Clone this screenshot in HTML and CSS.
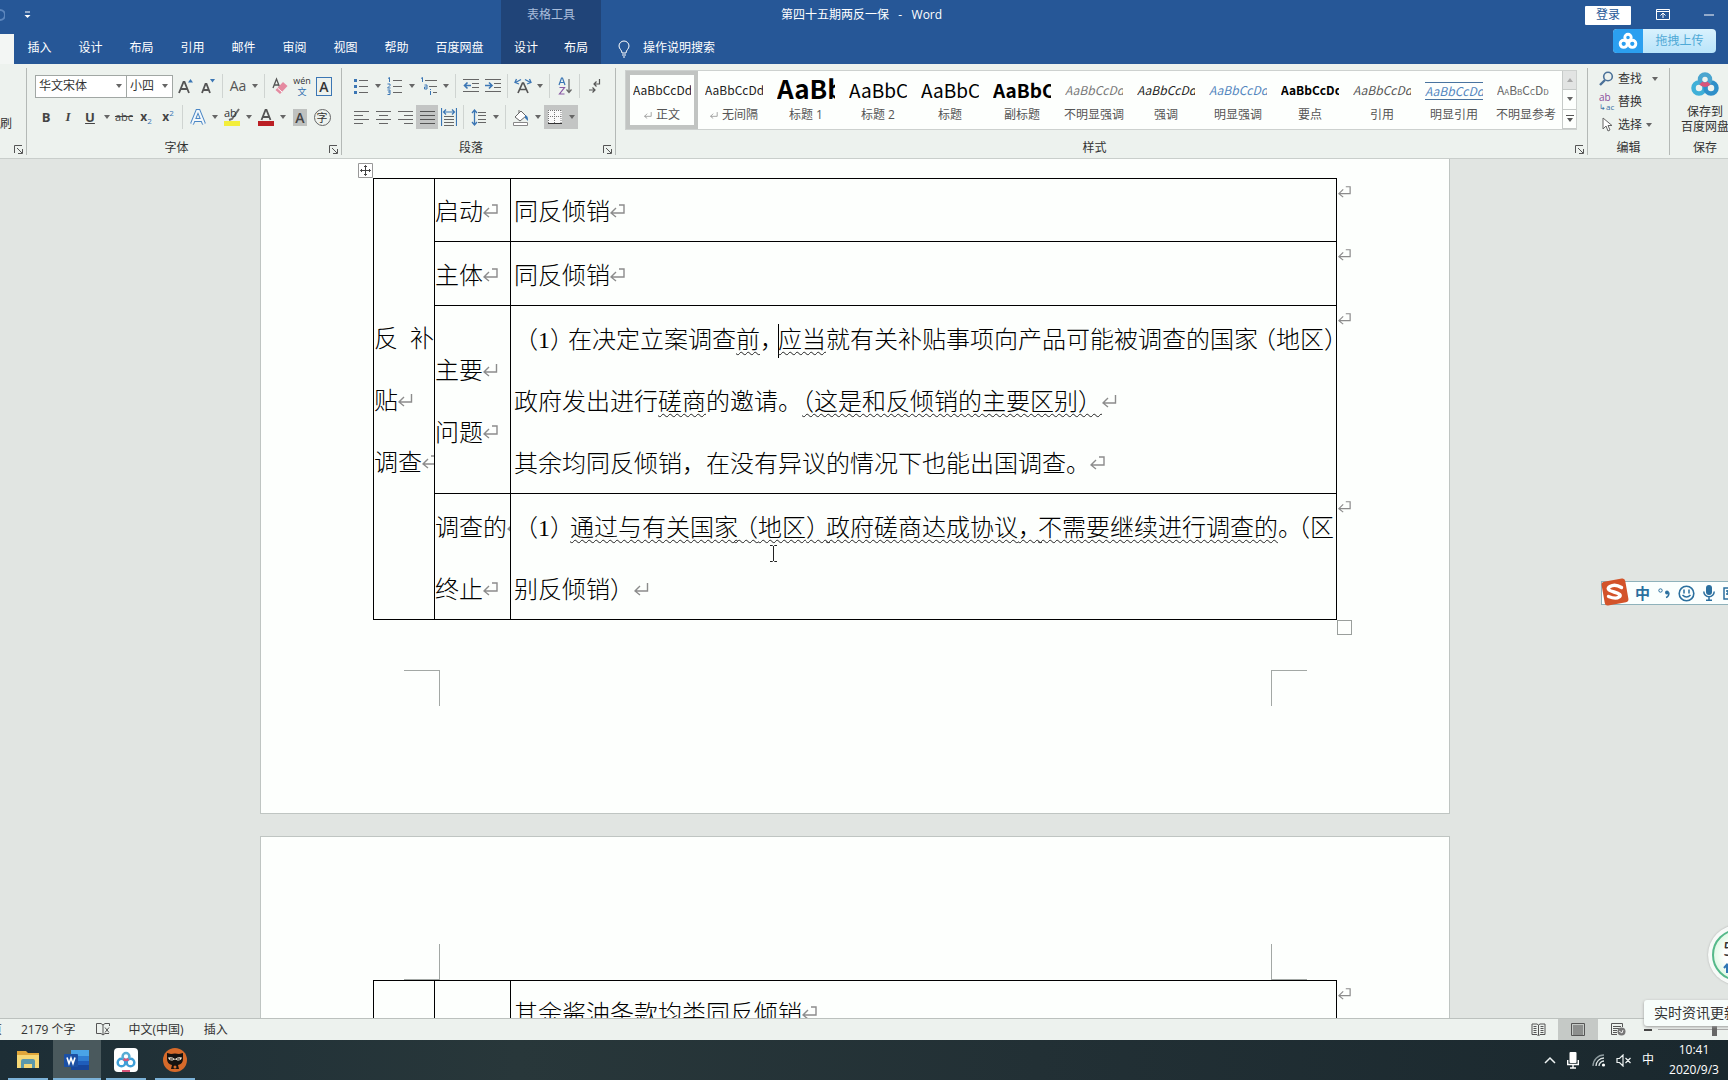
FILE: index.html
```html
<!DOCTYPE html>
<html lang="zh-CN">
<head>
<meta charset="utf-8">
<title>第四十五期两反一保 - Word</title>
<link rel="stylesheet" href="styles.css">
</head>
<body>
<svg class="defs" aria-hidden="true">
  <symbol id="arrow" viewBox="0 0 6 4"><path d="M0 0h6L3 4z" fill="#666"/></symbol>
  <symbol id="para" viewBox="0 0 15 15"><path d="M9 2h5v8H1M6 5L1 10l5 4" fill="none" stroke="#8c8c8c" stroke-width="1.4"/></symbol>
  <symbol id="brk" viewBox="0 0 15 15"><path d="M13.500 2v8H1M6 5L1 10l5 4" fill="none" stroke="#8c8c8c" stroke-width="1.400"/></symbol>
  <symbol id="launch" viewBox="0 0 9 9"><path d="M.5 8V.5H8M3 3l5 5M8.500 4v4.500H4" fill="none" stroke="#555"/></symbol>
  <symbol id="cloud" viewBox="0 0 28 24"><g fill="none" stroke-width="4.500"><circle cx="8" cy="16" r="5.500" stroke="#3fb0d8"/><circle cx="20" cy="16" r="5.500" stroke="#2f8fc9"/><circle cx="14" cy="7.500" r="5" stroke="#4aa5cf"/><path d="M10 11a5.500 5.500 0 0 0 8 0" stroke="#d9547a"/></g></symbol>
  <symbol id="cloudw" viewBox="0 0 28 24"><g fill="none" stroke-width="4" stroke="#fff"><circle cx="8" cy="16" r="5"/><circle cx="20" cy="16" r="5"/><circle cx="14" cy="7" r="4.500"/></g></symbol>
</svg>

<div class="app">
  <header class="top">
    <div class="top-main">
      <div class="qat">
        <svg width="5" height="14" viewBox="0 0 5 14"><path d="M0 2a5 5 0 0 1 0 10" fill="none" stroke="#5c86bd" stroke-width="2"/></svg>
        <button class="qat-more" aria-label="自定义快速访问工具栏"><svg width="7" height="8" viewBox="0 0 7 8"><path d="M1 1h5" stroke="#fff"/><path d="M.5 4h6L3.500 7z" fill="#fff"/></svg></button>
      </div>
      <nav class="tabs">
        <span class="tab-active"></span>
        <button class="tab">插入</button><button class="tab">设计</button><button class="tab">布局</button><button class="tab">引用</button><button class="tab">邮件</button><button class="tab">审阅</button><button class="tab">视图</button><button class="tab">帮助</button><button class="tab tab-wide">百度网盘</button>
      </nav>
    </div>
    <div class="top-context">
      <div class="context-title">表格工具</div>
      <nav class="tabs context-tabs"><button class="tab">设计</button><button class="tab">布局</button></nav>
    </div>
    <div class="top-rest">
      <div class="titlebar">
        <h1 class="doc-title">第四十五期两反一保&nbsp;&nbsp; -&nbsp;&nbsp; Word</h1>
        <button class="login">登录</button>
        <button class="win" aria-label="功能区显示选项"><svg width="14" height="12" viewBox="0 0 14 12"><path d="M.5.5h13v10H.5zM.5 2.500h13M7 9V4.500M4.500 6.500L7 4l2.500 2.500" fill="none" stroke="#fff"/></svg></button>
        <button class="win" aria-label="最小化"><svg width="10" height="2" viewBox="0 0 10 2"><path d="M0 1h10" stroke="#fff"/></svg></button>
      </div>
      <div class="tellme">
        <svg width="12" height="18" viewBox="0 0 12 18"><path d="M4 13c0-3-3-4-3-7a5 5 0 0 1 10 0c0 3-3 4-3 7zM4 15h4M5 17h2" fill="none" stroke="#fff"/></svg>
        <button class="tell">操作说明搜索</button>
        <button class="upload"><span class="upload-ic"><svg width="20" height="18"><use href="#cloudw"/></svg></span><span class="upload-tx">拖拽上传</span></button>
      </div>
    </div>
  </header>

  <section class="ribbon">
    <div class="group g-clip">
      <div class="g-body"><button class="painter">刷</button></div>
      <div class="g-foot"><span class="g-name"></span><button class="launch" aria-label="剪贴板"><svg width="9" height="9"><use href="#launch"/></svg></button></div>
    </div>
    <div class="group g-font">
      <div class="g-body">
        <div class="row">
          <select class="combo combo-font" aria-label="字体"><option>华文宋体</option></select><select class="combo combo-size" aria-label="字号"><option>小四</option></select>
          <button class="b first" aria-label="增大字号"><svg width="16" height="16" viewBox="0 0 16 16"><path d="M1 15L5.500 4h1L11 15M3 11h6" fill="none" stroke="#555" stroke-width="1.800"/><path d="M10 4.500L12.500 1 15 4.500z" fill="#3b76b4"/></svg></button>
          <button class="b" aria-label="减小字号"><svg width="16" height="16" viewBox="0 0 16 16"><path d="M2 15L5.500 6h1L10 15M3.500 12h5" fill="none" stroke="#555" stroke-width="1.800"/><path d="M10 1h5l-2.500 3.500z" fill="#3b76b4"/></svg></button>
          <i class="sep"></i>
          <button class="b t-aa">Aa</button><button class="d" aria-label="更改大小写"><svg><use href="#arrow"/></svg></button>
          <i class="sep"></i>
          <button class="b" aria-label="清除格式"><svg width="16" height="18" viewBox="0 0 16 18"><path d="M1 11L4.500 2 8 11M2 8h5" fill="none" stroke="#555" stroke-width="1.300"/><path d="M3.500 13L11 5l4.500 4L8 17z" fill="#e58aa0"/><path d="M5.500 11l4.500 4" stroke="#fff" stroke-width="1"/></svg></button>
          <button class="b t-wen"><span>wén</span><span class="blue">文</span></button>
          <button class="b" aria-label="字符边框"><span class="boxed">A</span></button>
        </div>
        <div class="row">
          <button class="b t-b">B</button><button class="b t-i">I</button><button class="b t-u">U</button><button class="d" aria-label="下划线样式"><svg><use href="#arrow"/></svg></button>
          <button class="b t-s">abc</button><button class="b t-x">x<sub>2</sub></button><button class="b t-x">x<sup>2</sup></button>
          <i class="sep"></i>
          <button class="b" aria-label="文本效果"><svg width="16" height="18" viewBox="0 0 16 18"><path d="M2 16L7.300 3h1.400L14 16M4.500 12h7" fill="none" stroke="#4a86c5" stroke-width="4"/><path d="M2 16L7.300 3h1.400L14 16M4.500 12h7" fill="none" stroke="#f3f8fb" stroke-width="2"/></svg></button><button class="d" aria-label="文本效果选项"><svg><use href="#arrow"/></svg></button>
          <button class="b t-hl"><span>ab</span><svg width="16" height="18" viewBox="0 0 16 18"><path d="M15 1L8 11l-3 1" fill="none" stroke="#6b6b6b" stroke-width="2"/><path d="M0 13h16v5H0z" fill="#f3ee3b"/></svg></button><button class="d" aria-label="突出显示颜色"><svg><use href="#arrow"/></svg></button>
          <button class="b" aria-label="字体颜色"><svg width="16" height="18" viewBox="0 0 16 18"><path d="M3.500 12L7.500 2h1l4 10M5 9h6" fill="none" stroke="#555" stroke-width="1.800"/><path d="M0 13h16v5H0z" fill="#bb1f24"/></svg></button><button class="d" aria-label="字体颜色选项"><svg><use href="#arrow"/></svg></button>
          <button class="b" aria-label="字符底纹"><span class="shade">A</span></button><button class="b" aria-label="带圈字符"><span class="ring">字</span></button>
        </div>
      </div>
      <div class="g-foot"><span class="g-name">字体</span><button class="launch" aria-label="字体设置"><svg width="9" height="9"><use href="#launch"/></svg></button></div>
    </div>
    <div class="group g-para">
      <div class="g-body">
        <div class="row">
          <button class="b" aria-label="项目符号"><svg width="16" height="18" viewBox="0 0 16 18"><path d="M1 2h3v3H1zM1 8h3v3H1zM1 14h3v3H1z" fill="#3b76b4"/><path d="M6 3.500h9M6 9.500h9M6 15.500h9" stroke="#666"/></svg></button><button class="d" aria-label="项目符号库"><svg><use href="#arrow"/></svg></button>
          <button class="b" aria-label="编号"><svg width="16" height="18" viewBox="0 0 16 18"><path d="M1 1.500l1.500-1v4.500M.5 7h2.500v1.500L.5 11h3M.5 13h2.500v2h-2M3 15v2.500H.5" fill="none" stroke="#3b76b4"/><path d="M6 3.500h9M6 9.500h9M6 15.500h9" stroke="#666"/></svg></button><button class="d" aria-label="编号库"><svg><use href="#arrow"/></svg></button>
          <button class="b" aria-label="多级列表"><svg width="18" height="18" viewBox="0 0 18 18"><path d="M1 1.500l1.500-1v4.500M4.500 8h2.500v4H4.500v-2h2M10.500 12v1M10.500 14v4" fill="none" stroke="#3b76b4"/><path d="M5 3.500h12M9 9.500h8M13 15.500h4" stroke="#666"/></svg></button><button class="d" aria-label="列表库"><svg><use href="#arrow"/></svg></button>
          <i class="sep"></i>
          <button class="b" aria-label="减少缩进量"><svg width="16" height="14" viewBox="0 0 16 14"><path d="M0 .5h16M9 4.500h7M9 8.500h7M0 12.500h16" stroke="#666"/><path d="M8 6.500H2M4.500 3.500l-3 3 3 3" fill="none" stroke="#3b76b4" stroke-width="1.600"/></svg></button>
          <button class="b" aria-label="增加缩进量"><svg width="16" height="14" viewBox="0 0 16 14"><path d="M0 .5h16M9 4.500h7M9 8.500h7M0 12.500h16" stroke="#666"/><path d="M0 6.500h6M4 3.500l3 3-3 3" fill="none" stroke="#3b76b4" stroke-width="1.600"/></svg></button>
          <i class="sep"></i>
          <button class="b" aria-label="中文版式"><svg width="18" height="16" viewBox="0 0 18 16"><path d="M4 15L8.500 5h1L14 15M6 11.500h6" fill="none" stroke="#555" stroke-width="1.700"/><path d="M7 1.500L1.500 4.500M2.500 1L1 4.500l4 1.500M11 1.500l5.500 3M15.500 1L17 4.500 13 6" fill="none" stroke="#3b76b4" stroke-width="1.300"/></svg></button><button class="d" aria-label="中文版式选项"><svg><use href="#arrow"/></svg></button>
          <i class="sep"></i>
          <button class="b" aria-label="排序"><svg width="14" height="18" viewBox="0 0 14 18"><path d="M1 8l2.500-7h1L7 8M2 5.500h4" fill="none" stroke="#3b76b4" stroke-width="1.200"/><path d="M1.500 10.500h5l-5 6.500h5" fill="none" stroke="#8a5aa5" stroke-width="1.200"/><path d="M11 2v13M8.500 12.500L11 15.500l2.500-3" fill="none" stroke="#666" stroke-width="1.200"/></svg></button>
          <i class="sep"></i>
          <button class="b" aria-label="显示编辑标记"><svg width="12" height="16" viewBox="0 0 12 16"><path d="M10.500 1v5H5M7.500 3.500L5 6l2.500 2.500M0 12h6M3.500 9.500L6 12l-2.500 2.500" fill="none" stroke="#555" stroke-width="1.200"/></svg></button>
        </div>
        <div class="row">
          <button class="b" aria-label="左对齐"><svg width="15" height="13" viewBox="0 0 15 13"><path d="M0 .5h15M0 4.500h9M0 8.500h15M0 12.500h9" stroke="#666"/></svg></button>
          <button class="b" aria-label="居中"><svg width="15" height="13" viewBox="0 0 15 13"><path d="M0 .5h15M3 4.500h9M0 8.500h15M3 12.500h9" stroke="#666"/></svg></button>
          <button class="b" aria-label="右对齐"><svg width="15" height="13" viewBox="0 0 15 13"><path d="M0 .5h15M6 4.500h9M0 8.500h15M6 12.500h9" stroke="#666"/></svg></button>
          <button class="b on" aria-label="两端对齐"><svg width="15" height="13" viewBox="0 0 15 13"><path d="M0 .5h15M0 4.500h15M0 8.500h15M0 12.500h15" stroke="#555"/></svg></button>
          <button class="b" aria-label="分散对齐"><svg width="16" height="18" viewBox="0 0 16 18"><path d="M.5 0v18M15.500 0v18M2.500 4h11M5 1.500L2.500 4 5 6.500M11 1.500L13.500 4 11 6.500" fill="none" stroke="#3b76b4" stroke-width="1.200"/><path d="M3 8.500h10M3 11.500h10M3 14.500h10M3 17.500h10" stroke="#666"/></svg></button>
          <i class="sep"></i>
          <button class="b" aria-label="行距"><svg width="16" height="17" viewBox="0 0 16 17"><path d="M3.500 1v15M1 4l2.500-3L6 4M1 13l2.500 3L6 13" fill="none" stroke="#3b76b4" stroke-width="1.300"/><path d="M7 3.500h8M7 6.500h8M7 10.500h8M7 13.500h8" stroke="#666"/></svg></button><button class="d" aria-label="行距选项"><svg><use href="#arrow"/></svg></button>
          <i class="sep"></i>
          <button class="b" aria-label="底纹"><svg width="16" height="17" viewBox="0 0 16 17"><path d="M2 8l6-6 5 5-6 5zM6 4V1" fill="#fff" stroke="#666"/><path d="M12 6c3 1 3 3 3 6l-3-3z" fill="#3b76b4"/><path d="M.5 13.500h14v3H.5z" fill="#fff" stroke="#888"/></svg></button><button class="d" aria-label="底纹颜色"><svg><use href="#arrow"/></svg></button>
          <button class="b on" aria-label="边框"><svg width="14" height="14" viewBox="0 0 14 14"><path d="M0 0h14v14H0z" fill="#fafafa"/><path d="M.5 0v13M13 0v13M0 .5h14M6.500 0v13M0 6.500h13" stroke="#777" stroke-dasharray="1 1"/><path d="M0 13.500h14" stroke="#333"/></svg></button><button class="d on" aria-label="边框选项"><svg><use href="#arrow"/></svg></button>
        </div>
      </div>
      <div class="g-foot"><span class="g-name">段落</span><button class="launch" aria-label="段落设置"><svg width="9" height="9"><use href="#launch"/></svg></button></div>
    </div>
    <div class="group g-style">
      <div class="g-body">
        <div class="gallery">
          <button class="st st-on"><span class="smp">AaBbCcDd</span><span class="nm"><svg width="8" height="8"><use href="#brk"/></svg> 正文</span></button>
          <button class="st"><span class="smp">AaBbCcDd</span><span class="nm"><svg width="8" height="8"><use href="#brk"/></svg> 无间隔</span></button>
          <button class="st"><span class="smp s-h1">AaBb</span><span class="nm">标题 1</span></button>
          <button class="st"><span class="smp s-h2">AaBbC</span><span class="nm">标题 2</span></button>
          <button class="st"><span class="smp s-h2">AaBbC</span><span class="nm">标题</span></button>
          <button class="st"><span class="smp s-h2 s-bold">AaBbC</span><span class="nm">副标题</span></button>
          <button class="st"><span class="smp s-it s-gray">AaBbCcDd</span><span class="nm">不明显强调</span></button>
          <button class="st"><span class="smp s-it">AaBbCcDd</span><span class="nm">强调</span></button>
          <button class="st"><span class="smp s-it s-blue">AaBbCcDd</span><span class="nm">明显强调</span></button>
          <button class="st"><span class="smp s-bold">AaBbCcDd</span><span class="nm">要点</span></button>
          <button class="st"><span class="smp s-it s-dim">AaBbCcDd</span><span class="nm">引用</span></button>
          <button class="st"><span class="smp s-it s-blue s-rule">AaBbCcDd</span><span class="nm">明显引用</span></button>
          <button class="st"><span class="smp s-sc">AaBbCcDd</span><span class="nm">不明显参考</span></button>
          <div class="scroll">
            <button class="up" aria-label="上一行"><svg width="6" height="4" viewBox="0 0 6 4"><path d="M0 4h6L3 0z" fill="#aaa"/></svg></button>
            <button aria-label="下一行"><svg width="6" height="4"><use href="#arrow"/></svg></button>
            <button aria-label="更多样式"><svg width="8" height="8" viewBox="0 0 8 8"><path d="M0 .5h8" stroke="#555"/><path d="M1 3h6L4 7z" fill="#555"/></svg></button>
          </div>
        </div>
      </div>
      <div class="g-foot"><span class="g-name">样式</span><button class="launch" aria-label="样式窗格"><svg width="9" height="9"><use href="#launch"/></svg></button></div>
    </div>
    <div class="group g-edit">
      <div class="g-body">
        <button class="ed"><svg width="15" height="15" viewBox="0 0 15 15"><circle cx="9" cy="5.500" r="4.300" fill="none" stroke="#4b7199" stroke-width="1.600"/><path d="M6 9l-5 5" stroke="#4b7199" stroke-width="2.400"/></svg><span>查找</span><svg class="far" width="6" height="4"><use href="#arrow"/></svg></button>
        <button class="ed"><span class="abac"><span>ab</span><span class="ac">↳ac</span></span><span>替换</span></button>
        <button class="ed"><svg width="15" height="15" viewBox="0 0 15 15"><path d="M4 1v11l3-3 2 5 2-1-2-4.500h4z" fill="#fff" stroke="#666"/></svg><span>选择</span><svg width="6" height="4"><use href="#arrow"/></svg></button>
      </div>
      <div class="g-foot"><span class="g-name">编辑</span></div>
    </div>
    <div class="group g-save">
      <div class="g-body"><button class="save"><svg width="28" height="24"><use href="#cloud"/></svg><span>保存到</span><span>百度网盘</span></button></div>
      <div class="g-foot"><span class="g-name">保存</span></div>
    </div>
  </section>

  <main class="canvas">
    <article class="page page-one">
      <div class="sheet">
        <svg class="move" width="15" height="15" viewBox="0 0 15 15"><path d="M.5.5h14v14H.5z" fill="#fff" stroke="#999"/><path d="M7.500 2.500v10M2.500 7.500h10M6 4l1.500-1.500L9 4M6 11l1.500 1.500L9 11M4 6L2.500 7.500 4 9M11 6l1.500 1.500L11 9" fill="none" stroke="#444"/></svg>
        <table class="doc">
          <colgroup><col class="c1"><col class="c2"><col></colgroup>
          <tr><td rowspan="4">反&ensp;补<br>贴<svg class="pm"><use href="#brk"/></svg><br>调查<svg class="pm"><use href="#para"/></svg></td><td>启动<svg class="pm"><use href="#para"/></svg></td><td class="txt">同反倾销<svg class="pm"><use href="#para"/></svg><svg class="rowend"><use href="#para"/></svg></td></tr>
          <tr class="r2"><td>主体<svg class="pm"><use href="#para"/></svg></td><td class="txt">同反倾销<svg class="pm"><use href="#para"/></svg><svg class="rowend"><use href="#para"/></svg></td></tr>
          <tr class="r3"><td>主要<svg class="pm"><use href="#brk"/></svg><br>问题<svg class="pm"><use href="#para"/></svg></td><td class="txt">（<span class="num">1</span><span class="k6">）</span>在决定立案调查<u>前</u><span class="k6">，</span><i class="caret"></i><u>应当</u>就有关补贴事项向产品可能被调查的国家<span class="o6">（</span>地区）<br>政府发出进行<u>磋商</u>的邀请。<u>（这是和反倾销的主要区别）</u><svg class="pm"><use href="#brk"/></svg><br>其余均同反倾销，在没有异议的情况下也能出国调查。<svg class="pm"><use href="#para"/></svg><svg class="rowend"><use href="#para"/></svg></td></tr>
          <tr class="r4"><td>调查的<svg class="pm"><use href="#para"/></svg><br>终止<svg class="pm"><use href="#para"/></svg></td><td class="txt">（<span class="num">1</span><span class="k4">）</span><u>通过与有关国家<span class="o4">（</span>地区<span class="k4">）</span>政府磋商达成协议<span class="k4">，</span>不需要继续进行调查的</u><span class="k4">。</span>（区<br>别反倾销）<svg class="pm"><use href="#brk"/></svg><svg class="rowend"><use href="#para"/></svg></td></tr>
        </table>
        <span class="handle"></span>
      </div>
      <div class="crops"><i class="crop tr"></i><i class="crop tl"></i></div>
      <svg class="ibeam" width="9" height="17" viewBox="0 0 9 17"><path d="M1 .5h2.500l1 1 1-1H8M1 16.500h2.500l1-1 1 1H8M4.500 1v15" fill="none" stroke="#222"/></svg>
    </article>
    <article class="page page-two">
      <div class="crops"><i class="crop br"></i><i class="crop bl"></i></div>
      <div class="sheet">
        <table class="doc">
          <colgroup><col class="c1"><col class="c2"><col></colgroup>
          <tr><td></td><td></td><td class="txt">其余酱油条款均类同反倾销<svg class="pm"><use href="#para"/></svg><svg class="rowend"><use href="#para"/></svg></td></tr>
        </table>
      </div>
    </article>
  </main>

  <footer class="status">
    <span class="cut">页</span>
    <button class="words">2179 个字</button>
    <button class="proof" aria-label="校对"><svg width="15" height="13" viewBox="0 0 15 13"><path d="M7 12V2L5 .500H.5v10H5L7 12l2-1.500h4M7 2L9 .500h4.500V3M9 4.500l4 5M13 4.500l-4 5" fill="none" stroke="#555"/></svg></button>
    <button class="lang">中文(中国)</button>
    <button class="ins">插入</button>
    <div class="views">
      <button class="view" aria-label="阅读视图"><svg width="15" height="13" viewBox="0 0 15 13"><path d="M7.500 12V2L6 1H1v10.500h5L7.500 13 9 11.500h5V1H9L7.500 2M2.500 3.500h3M2.500 5.500h3M2.500 7.500h3M2.500 9.500h3M9.500 3.500h3M9.500 5.500h3M9.500 7.500h3M9.500 9.500h3" fill="none" stroke="#555"/></svg></button>
      <button class="view view-on" aria-label="页面视图"><svg width="14" height="13" viewBox="0 0 14 13"><path d="M.5.5h13v12H.5zM2 3h10M2 5h10M2 7h10M2 9h10M2 11h10" fill="none" stroke="#555"/></svg></button>
      <button class="view" aria-label="Web 版式视图"><svg width="15" height="13" viewBox="0 0 15 13"><path d="M6 11.500H.5V.5h11V4M2 3.500h8M2 5.500h6M2 7.500h4M2 9.500h4" fill="none" stroke="#555"/><circle cx="10.500" cy="8.500" r="4" fill="#777"/><path d="M8 8l3 2 1-3" stroke="#eee" fill="none"/></svg></button>
      <button class="minus" aria-label="缩小"><svg width="8" height="2" viewBox="0 0 8 2"><path d="M0 1h8" stroke="#444" stroke-width="2"/></svg></button>
      <input class="zoom" type="range" min="0" max="100" value="50" aria-label="显示比例">
    </div>
  </footer>

  <footer class="taskbar">
    <button class="task" aria-label="文件资源管理器"><svg width="24" height="24" viewBox="0 0 24 24"><path d="M1 3h9l2 2h11v15H1z" fill="#e0a63a"/><path d="M1 7h22v13H1z" fill="#f6d876"/><path d="M5 20v-7q0-2 2-2h10q2 0 2 2v7h-3v-4H8v4z" fill="#5b98ac"/></svg></button>
    <button class="task task-on" aria-label="Word"><svg width="26" height="24" viewBox="0 0 26 24"><path d="M7 2h18v6H7z" fill="#4aa3e6"/><path d="M7 8h18v5H7z" fill="#2f7dd2"/><path d="M7 13h18v4H7z" fill="#1f5dbb"/><path d="M7 17h18v5H7z" fill="#17469c"/><rect x="0" y="6" width="14" height="13" rx="1" fill="#1c50a4"/><path d="M3 9.500l2 6 2-5.500 2 5.500 2-6" fill="none" stroke="#fff" stroke-width="1.600"/></svg></button>
    <button class="task" aria-label="百度网盘"><svg width="24" height="24" viewBox="0 0 24 24"><rect width="24" height="24" rx="4" fill="#fff"/><g fill="none" stroke-width="2.500"><circle cx="7.500" cy="14.500" r="3.800" stroke="#3f9fd8"/><circle cx="16.500" cy="14.500" r="3.800" stroke="#3f9fd8"/><circle cx="12" cy="8.500" r="3.400" stroke="#58acd4"/><path d="M9.500 11a4 4 0 0 0 5 0" stroke="#d9547a"/></g><path d="M8 23h8" stroke="#d9547a" stroke-width="2"/></svg></button>
    <button class="task" aria-label="直播助手"><svg width="24" height="24" viewBox="0 0 24 24"><circle cx="12" cy="12" r="12" fill="#d76a2a"/><path d="M4 5l4 1q4-1 8 0l4-1v6q0 5-5 6l1 4H8l1-4q-5-1-5-6z" fill="#161210"/><path d="M5 9.500q4-1 6 1 1 .8 2 0 2-2 6-1-1 3.500-4.500 3-1.500-1-2.500-1t-2.500 1Q6 13 5 9.500z" fill="#f4ead8"/><path d="M7 11h3M14 11h3" stroke="#161210" stroke-width="1.200"/><circle cx="12" cy="19" r="1.500" fill="#d76a2a"/></svg></button>
    <div class="tray">
      <svg width="12" height="8" viewBox="0 0 12 8"><path d="M1 7l5-5 5 5" fill="none" stroke="#eef3f3" stroke-width="1.500"/></svg>
      <svg class="t-mic" width="12" height="17" viewBox="0 0 12 17"><rect x="2.500" y="0" width="7" height="11" rx="1" fill="#fff"/><path d="M.7 8v4.500h10.600V8M6 12.500v3M3 16h6" fill="none" stroke="#fff" stroke-width="1.400"/></svg>
      <svg width="14" height="13" viewBox="0 0 14 13"><g fill="none" stroke-width="1.300"><path d="M1 12A11 11 0 0 1 12 1" stroke="#8d9a9e"/><path d="M4 12a8 8 0 0 1 8-8M7 12a5 5 0 0 1 5-5" stroke="#dfe6e6"/></g><circle cx="11.500" cy="11" r="1.600" fill="#fff"/></svg>
      <svg width="16" height="13" viewBox="0 0 16 13"><path d="M1 4.500h2.500L7 1v11L3.500 8.500H1zM9.500 4l5 5M14.500 4l-5 5" fill="none" stroke="#eef3f3" stroke-width="1.200"/></svg>
      <button class="ime">中</button>
      <button class="clock"><time>10:41</time><time>2020/9/3</time></button>
    </div>
  </footer>

  <aside class="sogou">
    <svg class="sg-logo" width="28" height="28" viewBox="0 0 28 28"><rect x="2" y="2" width="24" height="24" rx="3" fill="#d3532a" transform="rotate(-10 14 14)"/><path d="M20.500 9.500Q14 5.500 9 8.500T13 14t5 5q-3 2.500-10.500-.5" fill="none" stroke="#fff" stroke-width="3.400" stroke-linecap="round"/></svg>
    <button class="sg-cn">中</button>
    <svg width="12" height="12" viewBox="0 0 12 12"><circle cx="2.500" cy="3.500" r="1.700" fill="none" stroke="#2b6f9e"/><circle cx="9" cy="5.500" r="2" fill="#2b6f9e"/><path d="M11 5.500q0 4-3 5" fill="none" stroke="#2b6f9e" stroke-width="1.400"/></svg>
    <svg width="17" height="17" viewBox="0 0 17 17"><circle cx="8.500" cy="8.500" r="7.300" fill="none" stroke="#2b6f9e" stroke-width="1.600"/><path d="M6 4.500v4M11 4.500v4M4.500 10q4 4 8 0" fill="none" stroke="#2b6f9e" stroke-width="1.500"/></svg>
    <svg width="12" height="16" viewBox="0 0 12 16"><rect x="3" y="0" width="6" height="10" rx="3" fill="#2b6f9e"/><path d="M.8 6.500a5.200 5.200 0 0 0 10.400 0M6 12v3M3 15.300h6" fill="none" stroke="#2b6f9e" stroke-width="1.500"/></svg>
    <svg width="16" height="13" viewBox="0 0 16 13"><path d="M1 1h14v11H1zM3 4h10M3 7h10M5 10h6M5 3v5M9 3v5" fill="none" stroke="#2b6f9e" stroke-width="1.500"/></svg>
  </aside>
  <aside class="ball"><span class="ball-in"><b>5</b><svg width="8" height="10" viewBox="0 0 8 10"><path d="M4 10V2M1 5l3-3.500L7 5" fill="none" stroke="#2f77b5" stroke-width="2"/></svg></span></aside>
  <aside class="toast">实时资讯更新</aside>
</div>
</body>
</html>
```

FILE: styles.css
```css
* { box-sizing: border-box; }
html, body { margin: 0; height: 100%; }
body {
  font: 12px/16px "Open Sans", "Noto Sans CJK SC", sans-serif;
  color: #333;
  overflow: hidden;
}
button {
  font: inherit; color: inherit; background: none; border: 0; padding: 0; margin: 0;
  display: flex; align-items: center; justify-content: center; white-space: nowrap;
}
svg { display: block; flex: none; }
.defs { position: absolute; width: 0; height: 0; }
.app { position: relative; height: 100vh; display: flex; flex-direction: column; overflow: hidden; }

/* title bar and tabs */
.top { display: flex; height: 64px; flex: none; background: #265797; color: #fff; }
.top-main { width: 501px; }
.qat { display: flex; align-items: center; height: 30px; gap: 19px; }
.tabs { display: flex; height: 34px; padding-top: 2px; }
.tab-active { width: 14px; margin-top: 2px; background: #f3f6f4; }
.tab { width: 51px; }
.tab-wide { width: 75px; }
.top-context { width: 100px; background: #204478; }
.context-title { height: 30px; line-height: 30px; text-align: center; color: #a9bddb; }
.context-tabs .tab { width: 50px; }
.top-rest { flex: 1; min-width: 0; }
.titlebar { display: flex; align-items: center; height: 30px; }
.doc-title { flex: 1; margin: 0; padding-left: 180px; font-size: 12px; font-weight: 400; line-height: 30px; }
.login { width: 46px; height: 19px; background: #fff; color: #265797; border-radius: 1px; margin-right: 9px; }
.win { width: 46px; height: 30px; }
.win:last-child { margin-right: -4px; }
.tellme { display: flex; align-items: flex-start; height: 34px; padding: 0 12px 0 17px; }
.tellme > svg { margin-top: 10px; }
.tell { margin: 10px auto 0 13px; }
.upload { width: 103px; height: 24px; margin-top: -1px; border-radius: 4px; overflow: hidden; background: linear-gradient(#d9f1fd, #b9e4fa); color: #4fa9d6; }
.upload-ic { width: 30px; height: 24px; background: #2b9ff0; display: flex; align-items: center; justify-content: center; }
.upload-tx { flex: 1; }

/* ribbon, its last group runs past the window's edge */
.ribbon { display: flex; flex: none; height: 95px; margin-right: -12px; background: #edf2ee; border-bottom: 1px solid #c9cecb; overflow: hidden; }
.group { position: relative; display: flex; flex-direction: column; flex: none; padding: 10px 1px 1px 8px; }
.group:not(:last-child)::after { content: ""; position: absolute; right: 0; top: 4px; bottom: 3px; width: 1px; background: #b4b9b6; }
.g-clip { width: 27px; padding-left: 0; }
.g-font { width: 315px; }
.g-para { width: 274px; }
.g-style { flex: 1; min-width: 0; padding-top: 6px; padding-left: 9px; }
.g-edit { width: 82px; padding-top: 3px; }
.g-save { width: 70px; padding: 8px 0 1px; }
.g-body { flex: 1; min-height: 0; }
.g-foot { display: flex; align-items: center; height: 19px; }
.g-clip .g-foot, .g-font .g-foot, .g-para .g-foot, .g-style .g-foot, .g-edit .g-foot { margin-left: -8px; }
.g-name { flex: 1; text-align: center; }
.launch { width: 15px; height: 16px; margin-top: 4px; }
.painter { margin-top: 42px; }
.row { display: flex; align-items: center; height: 24px; margin-bottom: 7px; }
.b { width: 22px; height: 24px; position: relative; }
.d { width: 12px; height: 24px; }
.d svg { width: 6px; height: 4px; }
.on { background: #c3c5c4; }
.first { margin-left: 2px; }
.sep { width: 1px; height: 24px; margin: 0 4px 0 3px; background: #cfd4d1; }
.combo {
  height: 23px; border: 1px solid #a1a7a4; border-radius: 0; color: #333; font: inherit; padding: 0 0 0 3px; appearance: none;
  background: url("data:image/svg+xml,%3Csvg xmlns='http://www.w3.org/2000/svg' width='6' height='4'%3E%3Cpath d='M0 0h6L3 4z' fill='%23666'/%3E%3C/svg%3E") no-repeat right 4px center #fff;
}
.combo-font { width: 92px; }
.combo-size { width: 47px; margin-left: -1px; }
.t-aa { font-size: 14px; color: #555; }
.t-wen { flex-direction: column; line-height: 11px; font-size: 9px; }
.blue { color: #2f6fb0; }
.boxed { width: 16px; height: 19px; border: 1px solid #3b76b4; font-size: 14px; line-height: 17px; font-weight: 600; }
.t-b, .t-i, .t-u { font-size: 13px; font-weight: 700; color: #444; }
.t-i { font-family: "Liberation Serif", serif; font-style: italic; }
.t-u { text-decoration: underline; }
.t-s { text-decoration: line-through; color: #444; font-size: 11px; }
.t-x { font-size: 12px; font-weight: 700; color: #444; }
.t-x sub, .t-x sup { font-size: 8px; line-height: 10px; font-weight: 400; color: #3b76b4; }
.t-x sub { margin-top: 8px; } .t-x sup { margin-bottom: 8px; }
.t-hl span { position: absolute; left: 3px; top: 0; font-size: 11px; }
.shade { width: 14px; height: 17px; background: #bfc2c0; font-size: 14px; line-height: 17px; font-weight: 600; color: #444; }
.ring { width: 17px; height: 17px; border: 1px solid #666; border-radius: 50%; font-size: 11px; line-height: 15px; }

.gallery { display: flex; height: 60px; margin-right: 10px; border: 1px solid #cdd1cf; background: #fdfffd; overflow: hidden; }
.st { width: 72px; flex: none; height: 58px; flex-direction: column; justify-content: flex-start; padding: 0 7px; }
.st-on { box-shadow: inset 0 0 0 4px #c1c4c2; }
.smp { width: 100%; height: 35px; line-height: 38px; overflow: hidden; text-align: left; font-family: "Noto Sans CJK SC", sans-serif; font-size: 12px; color: #222; }
.nm { display: flex; align-items: center; justify-content: center; gap: 4px; height: 18px; color: #555; }
.s-h1 { font-size: 26px; line-height: 33px; font-weight: 700; color: #000; }
.s-h2 { font-size: 19px; line-height: 37px; color: #000; }
.s-bold { font-weight: 700; color: #000; }
.s-it { font-style: italic; }
.s-gray { color: #777; } .s-dim { color: #555; } .s-blue { color: #5285bd; }
.s-rule { height: 18px; line-height: 16px; margin: 11px 0 6px; border-top: 1px solid #49739f; border-bottom: 1px solid #49739f; }
.s-sc { font-variant: small-caps; color: #666; }
.scroll { margin-left: auto; width: 14px; display: flex; flex-direction: column; }
.scroll button { flex: 1; border-left: 1px solid #c6cac8; border-bottom: 1px solid #c6cac8; }
.scroll .up { background: #e2e4e3; }

.ed { height: 23px; gap: 4px; padding-left: 3px; }
.ed .far { margin-left: 6px; }
.abac { width: 15px; font-size: 10px; line-height: 9px; color: #8a4d9c; text-align: left; display: flex; flex-direction: column; }
.ac { color: #3b6fa5; font-size: 8px; }
.save { flex-direction: column; width: 100%; line-height: 15px; }
.save svg { margin-bottom: 8px; }

/* document */
.canvas { flex: 1; min-height: 0; background: #e1e5e2; overflow: hidden; padding-right: 18px; }
.page { position: relative; max-width: 1190px; margin: 0 auto; background: #fdfffd; border: 1px solid #bfc5c2; }
.page-one { border-top: 0; padding: 19px 112px 107px; }
.page-two { margin-top: 22px; padding: 107px 112px 60px; }
.sheet { position: relative; }
.move { position: absolute; left: -15px; top: -15px; }
.handle { position: absolute; right: -15px; bottom: -15px; width: 15px; height: 15px; border: 1px solid #9a9f9c; }
.doc { width: 100%; table-layout: fixed; border-collapse: collapse; font: 300 24px/62px "Noto Sans CJK SC", sans-serif; color: #000; }
.c1 { width: 61px; } .c2 { width: 76px; }
.doc td { border: 1px solid #000; padding: 0; vertical-align: middle; white-space: nowrap; overflow: hidden; position: relative; }
.doc td.txt { padding-left: 3px; overflow: visible; }
.r2 { height: 64px; } .r3 { height: 188px; } .r4 { height: 126px; }
.pm { display: inline-block; width: 15px; height: 15px; vertical-align: 2px; }
.rowend { position: absolute; left: 100%; top: 6px; width: 13px; height: 13px; margin-left: 2px; }
.doc u { text-decoration: underline wavy #222 1px; text-underline-offset: 3px; text-decoration-skip-ink: none; }
.num { font-family: "Liberation Serif", serif; font-weight: 400; line-height: 0; }
.k4 { margin-right: -4px; } .k6 { margin-right: -6px; }
.o4 { margin-left: -4px; } .o6 { margin-left: -6px; }
.caret { display: inline-block; width: 1px; height: 34px; margin-right: -1px; background: #000; vertical-align: middle; }
.crops { display: flex; justify-content: space-between; margin: 50px 30px 0 31px; }
.page-two .crops { margin-top: 0; }
.crop { width: 36px; height: 36px; border: 0 solid #a3a8a5; }
.tr { border-width: 1px 1px 0 0; } .tl { border-width: 1px 0 0 1px; }
.br { border-width: 0 1px 1px 0; } .bl { border-width: 0 0 1px 1px; }
.ibeam { position: absolute; left: 508px; top: 386px; }

/* status bar */
.status { display: flex; align-items: center; flex: none; height: 22px; background: #edf2ee; border-top: 1px solid #bcc1be; overflow: hidden; }
.cut { width: 12px; margin-left: -10px; }
.words { margin-left: 19px; } .proof { margin-left: 20px; } .lang { margin-left: 18px; } .ins { margin-left: 20px; }
.views { display: flex; align-items: center; margin: 0 -42px 0 auto; }
.view { width: 40px; height: 21px; }
.view-on { background: #c5c9c6; }
.minus { width: 12px; height: 14px; margin: 0 4px; }
.zoom { appearance: none; width: 112px; height: 14px; margin: 0; background: linear-gradient(#aaa, #aaa) no-repeat center / 100% 1px; }
.zoom::-webkit-slider-thumb { appearance: none; width: 5px; height: 13px; background: #666; border: 0; }

/* taskbar */
.taskbar { display: flex; flex: none; height: 40px; padding-left: 4px; background: linear-gradient(90deg, #1d2e36, #28373a 30%, #223035 60%, #1a282e); color: #fff; }
.task { position: relative; width: 48px; height: 40px; margin-right: 1px; }
.task::after { content: ""; position: absolute; left: 4px; right: 4px; bottom: 0; height: 2px; background: #7cb2d8; }
.task-on { background: #4a595d; }
.task-on::after { left: 0; right: 0; }
.tray { margin-left: auto; display: flex; align-items: center; gap: 10px; padding-right: 7px; }
.t-mic { margin: 0 3px 0 1px; }
.ime { font-size: 12px; margin-right: 3px; }
.clock { flex-direction: column; width: 54px; line-height: 20px; }

/* floating tools over the window */
.sogou { position: absolute; left: 1601px; top: 581px; display: flex; align-items: center; gap: 8px; height: 24px; width: 140px; background: #fbfffe; border: 1px solid #8fb2bb; border-right: 0; }
.sg-logo { margin: -2px -2px 0 -1px; }
.sg-cn { font-size: 15px; font-weight: 700; color: #2b6f9e; }
.ball { position: absolute; left: 1708px; top: 925px; width: 60px; height: 60px; border-radius: 50%; background: #f7faf8; padding: 4px; box-shadow: 0 0 2px #aaa; }
.ball-in { display: block; width: 52px; height: 52px; border: 2px solid #55b98a; border-radius: 50%; background: radial-gradient(#fff 40%, #c5f3cf); padding: 8px 0 0 9px; }
.ball b { display: block; font-size: 20px; font-weight: 400; line-height: 20px; margin-bottom: 4px; }
.toast { position: absolute; left: 1644px; top: 1000px; width: 100px; height: 26px; padding-left: 10px; font-size: 14px; line-height: 26px; background: #f7fdfb; border-radius: 3px; white-space: nowrap; box-shadow: 0 1px 3px #999; }
```
